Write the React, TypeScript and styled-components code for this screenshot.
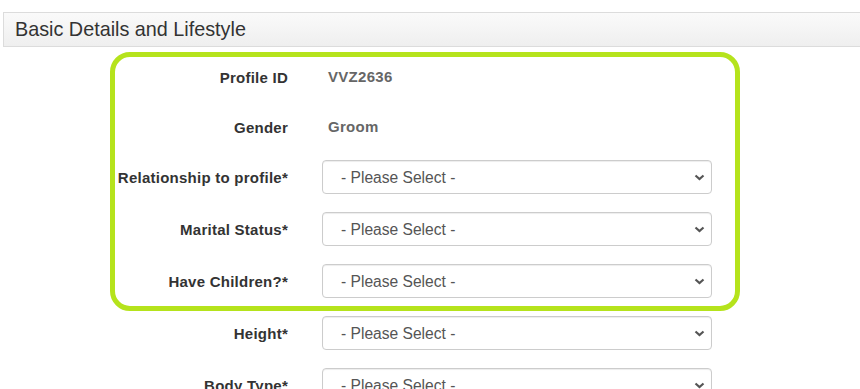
import styled, { createGlobalStyle } from 'styled-components';

const GlobalStyle = createGlobalStyle`
  html, body {
    margin: 0;
    padding: 0;
    overflow: hidden;
    background: #fff;
    font-family: 'Liberation Sans', Arial, sans-serif;
  }
`;

type Field = { label: string; value?: string };

const highlighted: Field[] = [
  { label: 'Profile ID', value: 'VVZ2636' },
  { label: 'Gender', value: 'Groom' },
  { label: 'Relationship to profile*' },
  { label: 'Marital Status*' },
  { label: 'Have Children?*' },
];

const rest: Field[] = [{ label: 'Height*' }, { label: 'Body Type*' }];

const Chevron = () => (
  <svg width='11' height='7' viewBox='0 0 11 7'>
    <polyline points='1.5,1.5 5.5,5 9.5,1.5' fill='none' stroke='#555' strokeWidth='2.2' />
  </svg>
);

const FieldRow = ({ label, value }: Field) => (
  <Row $static={!!value}>
    <Label>{label}</Label>
    {value ? (
      <Value>{value}</Value>
    ) : (
      <SelectWrap>
        <Select defaultValue=''>
          <option value=''>- Please Select -</option>
        </Select>
        <Arrow>
          <Chevron />
        </Arrow>
      </SelectWrap>
    )}
  </Row>
);

export default function App() {
  return (
    <Page>
      <GlobalStyle />
      <Heading>Basic Details and Lifestyle</Heading>
      <Form>
        <Highlight>
          {highlighted.map((f) => (
            <FieldRow key={f.label} {...f} />
          ))}
        </Highlight>
        <Plain>
          {rest.map((f) => (
            <FieldRow key={f.label} {...f} />
          ))}
        </Plain>
      </Form>
    </Page>
  );
}

const Page = styled.div`
  padding: 12px 0 0 3px;
  width: 880px;
`;

const Heading = styled.h2`
  margin: 0;
  height: 33px;
  padding: 0 11px;
  display: flex;
  align-items: center;
  border: 1px solid #dcdcdc;
  border-right: none;
  background: linear-gradient(to bottom, #fafafa 0%, #efefef 100%);
  color: #333;
  font-size: 19.8px;
  font-weight: normal;
`;

const Form = styled.div`
  margin: 5px 0 0 107px;
  width: 630px;
`;

const Highlight = styled.div`
  border: 5px solid #b5e31c;
  border-radius: 20px;
  padding: 3px 0 8px;
  margin-bottom: 5px;
`;

const Plain = styled.div`
  padding-left: 5px;
`;

const Row = styled.div<{ $static: boolean }>`
  display: grid;
  grid-template-columns: 173px 390px;
  column-gap: 34px;
  align-items: center;
  height: 34px;
  margin-bottom: ${(p) => (p.$static ? '16px' : '18px')};
  &:last-child {
    margin-bottom: 0;
  }
  ${Plain} > &:last-child {
    margin-bottom: 18px;
  }
`;

const Label = styled.div`
  text-align: right;
  font-size: 15px;
  letter-spacing: 0.25px;
  font-weight: bold;
  color: #333;
  white-space: nowrap;
`;

const Value = styled.div`
  padding-left: 6px;
  margin-top: -2px;
  font-size: 15px;
  letter-spacing: 0.3px;
  font-weight: bold;
  color: #666;
`;

const SelectWrap = styled.div`
  position: relative;
  height: 34px;
`;

const Select = styled.select`
  appearance: none;
  width: 100%;
  height: 34px;
  box-sizing: border-box;
  padding: 0 30px 0 18px;
  border: 1px solid #ccc;
  border-radius: 4px;
  background: #fff;
  box-shadow: inset 0 1px 1px rgba(0, 0, 0, 0.075);
  font-family: 'Liberation Sans', Arial, sans-serif;
  font-size: 15.6px;
  color: #555;
`;

const Arrow = styled.span`
  position: absolute;
  right: 7px;
  top: 14px;
  display: flex;
  pointer-events: none;
`;
